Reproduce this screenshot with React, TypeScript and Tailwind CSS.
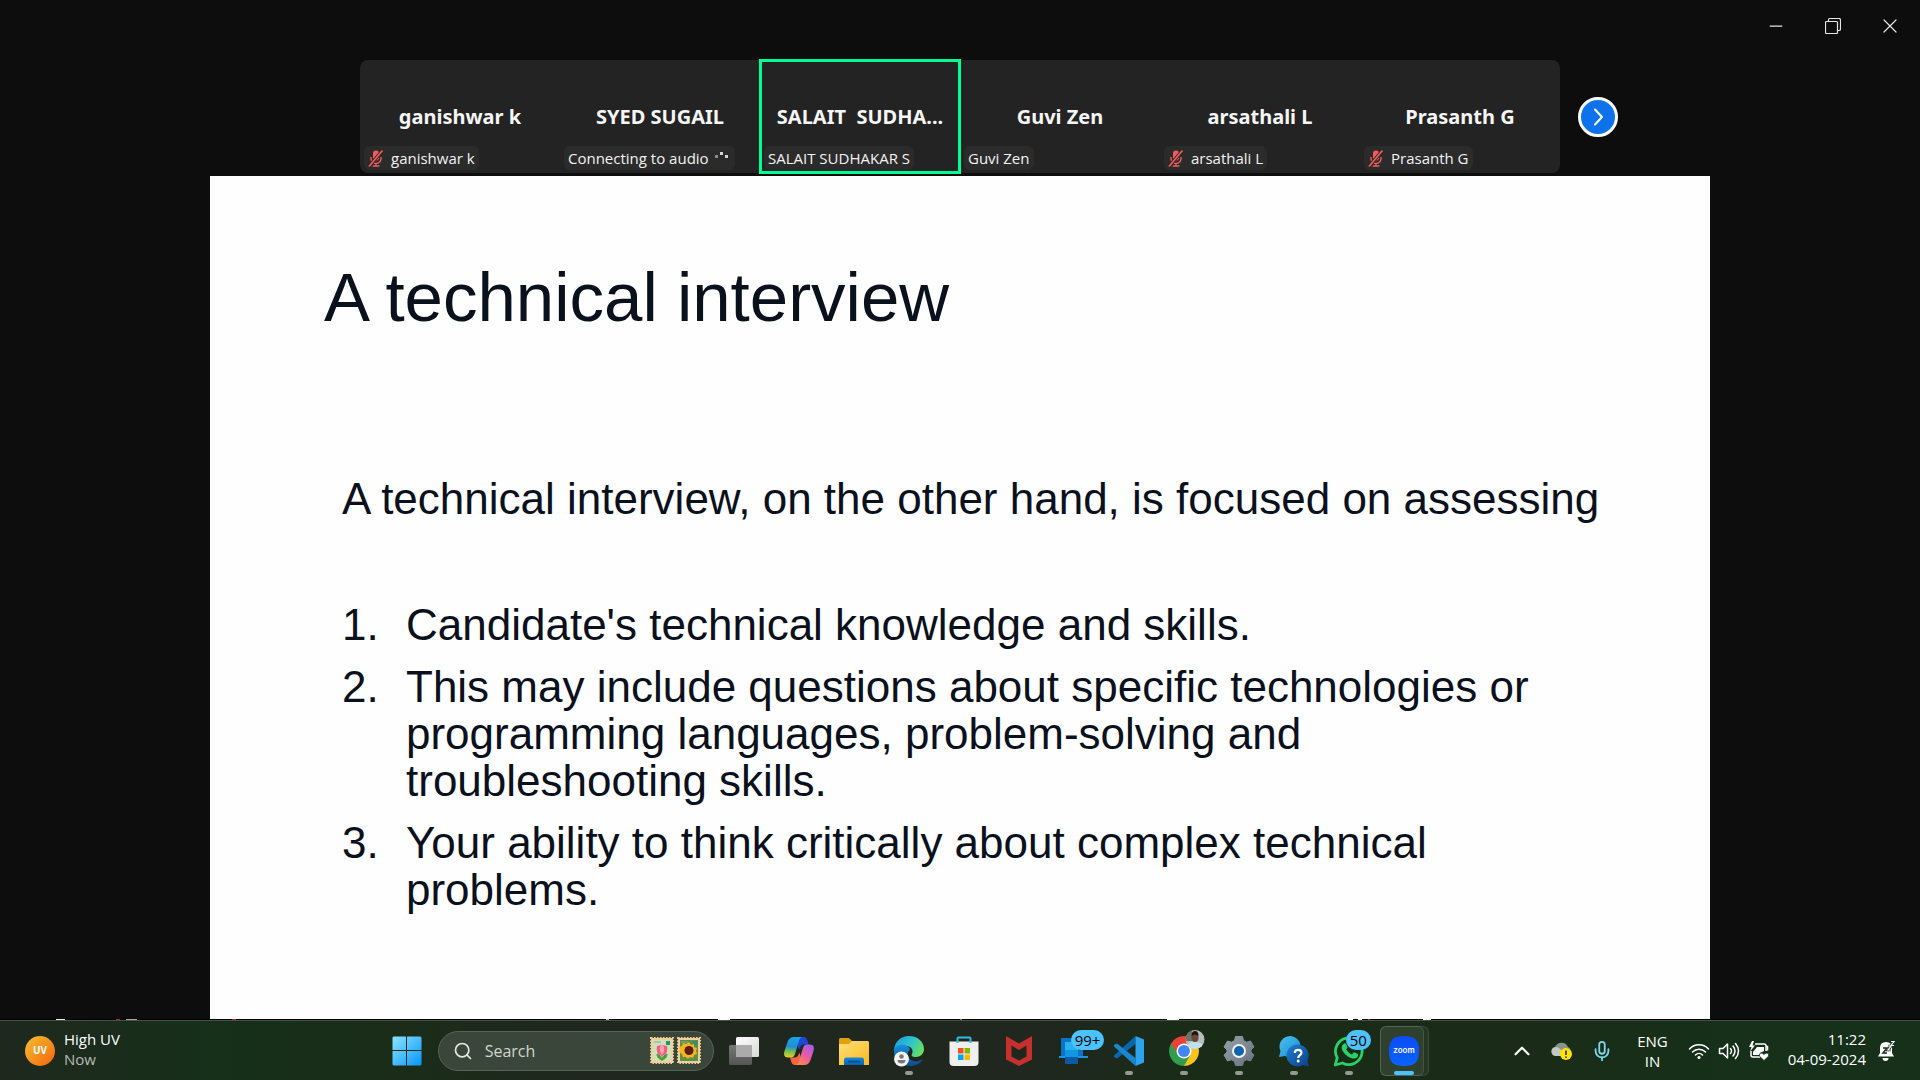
import React from "react";
import { Minus, X, Search, ChevronUp, Mic } from "lucide-react";

type Tile = { name: string; label: string; muted?: boolean; active?: boolean; connecting?: boolean };

const tiles: Tile[] = [
  { name: "ganishwar k", label: "ganishwar k", muted: true },
  { name: "SYED SUGAIL", label: "Connecting to audio", connecting: true },
  { name: "SALAIT  SUDHA...", label: "SALAIT SUDHAKAR S", active: true },
  { name: "Guvi Zen", label: "Guvi Zen" },
  { name: "arsathali L", label: "arsathali L", muted: true },
  { name: "Prasanth G", label: "Prasanth G", muted: true },
];

function MutedMic() {
  return (
    <svg width="16" height="17" viewBox="0 0 16 17" aria-hidden="true">
      <rect x="5" y="0.5" width="6" height="10" rx="3" fill="#f25c5c" />
      <path d="M3 7v1.5a5 5 0 0 0 10 0V7M8 13.5V16M4.5 16h7" stroke="#f25c5c" strokeWidth="1.4" fill="none" />
      <path d="M1 16.5L14.5 0.5" stroke="#262626" strokeWidth="3.4" />
      <path d="M1 16.5L14.5 0.5" stroke="#f25c5c" strokeWidth="1.7" />
    </svg>
  );
}

function ParticipantTile({ tile }: { tile: Tile }) {
  return (
    <li className="relative flex h-[113px] min-w-0 flex-1 items-center justify-center">
      <span className="font-['Noto_Sans',sans-serif] text-xl font-bold whitespace-pre text-[#f5f5f5]">{tile.name}</span>
      <span className="absolute bottom-[3px] left-1 flex h-6 items-center rounded-md bg-[#2b2b2b] px-1 text-[15px] leading-6 whitespace-nowrap text-[#f2f2f2]">
        {tile.muted && <span className="mr-[7px]"><MutedMic /></span>}
        {tile.label}
        {tile.connecting && (
          <svg className="ml-1" width="18" height="14" viewBox="0 0 18 14" aria-hidden="true">
            <g fill="#d5d5d5">
              <rect x="2" y="4" width="3" height="3" fill="#8a8a8a" />
              <rect x="7" y="1" width="3" height="3" />
              <rect x="12" y="4" width="3" height="3" />
            </g>
          </svg>
        )}
      </span>
      {tile.active && <span className="absolute -inset-x-px -inset-y-px border-[3px] border-[#00ff91]" />}
    </li>
  );
}

function Stamp({ flower }: { flower: "tulip" | "sunflower" }) {
  return (
    <svg width="24" height="27" viewBox="0 0 24 27" aria-hidden="true">
      <rect x="1" y="1" width="22" height="25" fill="#f0cf98" stroke="#f0cf98" strokeWidth="2" strokeDasharray="1.6 1.4" />
      <rect x="3" y="3" width="18" height="21" fill={flower === "tulip" ? "#cfe0bd" : "#5f8d4a"} />
      <path d="M4 5h7" stroke="#7fb08f" />
      <rect x="16" y="4" width="4" height="4" fill="#2d8f6d" />
      {flower === "tulip" ? (
        <g>
          <path d="M12 16v8M12 23c-4-1-5-4-5-6 3 1 4 3 5 6zM12 23c4-1 5-4 5-6-3 1-4 3-5 6z" fill="#4f9b3b" stroke="#4f9b3b" />
          <path d="M7 9c2 0 3-1 5-1s3 1 5 1c1 6-1 9-5 10-4-1-6-4-5-10z" fill="#ee5f7c" />
          <path d="M12 7c3 3 3 7 0 11-3-4-3-8 0-11z" fill="#ff9eae" />
        </g>
      ) : (
        <g>
          <path d="M12 5l2 3 3-1 0 3 3 1-1 3 1 3-3 1-1 3-3-1-2 2-2-2-3 0-1-3-3-2 1-3-1-2 3-1 1-3 3 1z" fill="#f6b51c" />
          <circle cx="12" cy="13.500" r="4.500" fill="#5a1e12" />
        </g>
      )}
    </svg>
  );
}

const WindowsLogo = () => (
  <svg width="30" height="30" viewBox="0 0 30 30">
    <defs>
      <linearGradient id="win" x1="0" y1="0" x2="1" y2="1">
        <stop offset="0" stopColor="#8be4ff" />
        <stop offset="1" stopColor="#0796f8" />
      </linearGradient>
    </defs>
    <path d="M1.500 0.500H14V14H0.500V1.500zM15 0.500h13.500l1 1V14H15zM0.500 15H14v14.500H1.500l-1-1zM15 15h14.500v13.500l-1 1H15z" fill="url(#win)" />
  </svg>
);

const TaskView = () => (
  <svg width="32" height="32" viewBox="0 0 32 32">
    <defs>
      <linearGradient id="tvb" x1="0" y1="0" x2="0" y2="1"><stop offset="0" stopColor="#777" /><stop offset="1" stopColor="#555" /></linearGradient>
      <linearGradient id="tvf" x1="0" y1="0" x2="1" y2="1"><stop offset="0" stopColor="#fff" /><stop offset="1" stopColor="#d9d9d9" /></linearGradient>
    </defs>
    <rect x="8" y="2" width="23" height="20" rx="1.500" fill="url(#tvf)" />
    <rect x="1" y="10" width="23" height="20" rx="1.500" fill="url(#tvb)" />
    <rect x="8" y="10" width="16" height="12" fill="#ababab" />
  </svg>
);

const Copilot = () => (
  <svg width="32" height="32" viewBox="0 0 32 32">
    <defs>
      <linearGradient id="cpa" x1="0.300" y1="0" x2="0.200" y2="1">
        <stop offset="0" stopColor="#18a5e8" /><stop offset="0.450" stopColor="#1f8fd0" /><stop offset="0.700" stopColor="#6fbf54" /><stop offset="1" stopColor="#f0cf1c" />
      </linearGradient>
      <linearGradient id="cpb" x1="0.800" y1="0" x2="0.200" y2="1">
        <stop offset="0" stopColor="#a25cf0" /><stop offset="0.500" stopColor="#e85aa5" /><stop offset="1" stopColor="#ff8a4a" />
      </linearGradient>
    </defs>
    <path d="M12 2h9c2 0 3 2 3.500 4l1 3.500H21c-3 0-4 2-5 5z" fill="#1b48d8" />
    <path d="M20 30h-8c-2.500 0-3.500-2-4-4l-1-3.500h4.500c2.500 0 4-2 5-5z" fill="#f4663f" />
    <path d="M11 2h8.500c-2 0-3 2-3.700 4.500L12 19c-.8 2.500-2 3.500-4 3.500H5c-4 0-4.500-3-3.500-6.500l3-9C5.500 4 7.500 2 11 2z" fill="url(#cpa)" />
    <path d="M21 30h-8.500c2 0 3-2 3.700-4.500L20 13c.8-2.500 2-3.500 4-3.500h3c4 0 4.500 3 3.500 6.500l-3 9C26.500 28 24.500 30 21 30z" fill="url(#cpb)" />
  </svg>
);

const Folder = () => (
  <svg width="32" height="32" viewBox="0 0 32 32">
    <defs>
      <linearGradient id="fld" x1="0" y1="0" x2="1" y2="1"><stop offset="0" stopColor="#ffe07a" /><stop offset="1" stopColor="#fbb91c" /></linearGradient>
      <linearGradient id="fldb" x1="0" y1="0" x2="0" y2="1"><stop offset="0" stopColor="#1787d8" /><stop offset="1" stopColor="#0b63b0" /></linearGradient>
    </defs>
    <path d="M1 4.500Q1 3 2.500 3H10q1 0 2 1l2 2h16v8H1z" fill="#e3a008" />
    <path d="M1 9h10l3-3h15.500Q31 6 31 7.500V30H1z" fill="url(#fld)" />
    <path d="M6 30v-5q0-2.500 2.500-2.500h15q2.500 0 2.500 2.500v5z" fill="url(#fldb)" />
    <path d="M10 26.500h12" stroke="#0a4c8c" strokeWidth="1.500" />
  </svg>
);

const Edge = () => (
  <svg width="32" height="32" viewBox="0 0 32 32">
    <defs>
      <linearGradient id="ed1" x1="0" y1="0.200" x2="1" y2="0.600"><stop offset="0" stopColor="#1c9de0" /><stop offset="0.550" stopColor="#2fc5c8" /><stop offset="1" stopColor="#6be05a" /></linearGradient>
      <linearGradient id="ed2" x1="0" y1="0" x2="0" y2="1"><stop offset="0" stopColor="#1591dc" /><stop offset="1" stopColor="#0c4a94" /></linearGradient>
    </defs>
    <path d="M1 15C2 6 8 1 16 1c9 0 15 6 15 13 0 5-4 8-8 8-4 0-5-1-4-3 2-4-1-8-6-8-6 0-10 4-12 4z" fill="url(#ed1)" />
    <path d="M1 15c2-5 7-6 11-5 3 1 5 3 5 5-4 2-3 9 3 11 4 1 7 0 10-2-3 5-8 7-13 7C7 31 0 24 1 15z" fill="url(#ed2)" />
    <circle cx="8.500" cy="24" r="7.500" fill="#f4f4f4" />
    <circle cx="8.500" cy="21.500" r="2.300" fill="#777" />
    <path d="M4.500 25h8q0 3.500-4 3.500t-4-3.500z" fill="#777" />
  </svg>
);

const Store = () => (
  <svg width="32" height="32" viewBox="0 0 32 32">
    <path d="M1.500 6.500h29V27q0 4-4 4h-21q-4 0-4-4z" fill="#efefef" />
    <path d="M9.500 8V3.500q0-1 1-1h11q1 0 1 1V8" fill="none" stroke="#2ebbe8" strokeWidth="2" />
    <rect x="10" y="13" width="5.500" height="5.500" fill="#f25022" /><rect x="16.500" y="13" width="5.500" height="5.500" fill="#7fba00" />
    <rect x="10" y="19.500" width="5.500" height="5.500" fill="#00a4ef" /><rect x="16.500" y="19.500" width="5.500" height="5.500" fill="#ffb900" />
  </svg>
);

const McAfee = () => (
  <svg width="32" height="32" viewBox="0 0 32 32">
    <path d="M3 1l13 7.500L29 1v23.500L16 31 3 24.500z" fill="#c6302f" />
    <path d="M8.500 10.500L16 15l7.500-4.500v11L16 25.500l-7.500-4z" fill="#1f281d" />
  </svg>
);

const PhoneLink = () => (
  <svg width="32" height="32" viewBox="0 0 32 32">
    <rect x="3" y="3" width="22" height="20" rx="1" fill="#0b74c8" />
    <path d="M1 21h29v2H1z" fill="#1b94e2" />
    <rect x="7" y="7" width="13" height="22" fill="#28b2f0" />
    <rect x="7" y="15" width="13" height="8" fill="#1297df" />
    <rect x="7" y="22" width="13" height="7" fill="#0a5aa8" />
  </svg>
);

const VSCode = () => (
  <svg width="32" height="32" viewBox="0 0 32 32">
    <path d="M22.500 1v8L4 23.500 1 22v-1.500z" fill="#0b66ad" />
    <path d="M22.500 31v-8L4 8.500 1 10v1.500z" fill="#1a86d0" />
    <path d="M22.500 1L31 4.500v23L22.500 31z" fill="#2ba5ee" />
  </svg>
);

const Chrome = () => (
  <svg width="38" height="38" viewBox="0 0 38 38">
    <path d="M17 22L29.990 14.500A15 15 0 0 1 17 37z" fill="#fcc31e" />
    <path d="M17 22l6.500 3.750L17 37A15 15 0 0 1 4.010 14.500z" fill="#2f9e4f" />
    <path d="M17 15h13.300l-.31-.5A15 15 0 0 0 4.010 14.500L10.900 25.500z" fill="#ea4335" />
    <circle cx="17" cy="22" r="7.500" fill="#fff" />
    <circle cx="17" cy="22" r="6" fill="#4285f4" />
    <clipPath id="av"><circle cx="28" cy="10.500" r="9.500" /></clipPath>
    <g clipPath="url(#av)">
      <rect x="18" y="0" width="20" height="21" fill="#b9beb8" />
      <rect x="18" y="0" width="7" height="12" fill="#6d7268" />
      <path d="M19 21c0-6 4-8 9-8s9 2 9 8z" fill="#bfe3ee" />
      <ellipse cx="28" cy="8.500" rx="3.500" ry="4.500" fill="#6b4535" />
      <path d="M24.500 7q0-5 3.500-5t3.500 5q-3.500-3-7 0z" fill="#1a1512" />
    </g>
  </svg>
);

const Gear = () => (
  <svg width="32" height="32" viewBox="0 0 32 32">
    <defs><linearGradient id="gr" x1="0" y1="0" x2="1" y2="1"><stop offset="0" stopColor="#97a2ad" /><stop offset="1" stopColor="#66717c" /></linearGradient></defs>
    <path d="M12.500 1.500h7l1 4 3 1.700 4-1.200 3.500 6-3 2.900v2.200l3 2.900-3.500 6-4-1.200-3 1.700-1 4h-7l-1-4-3-1.700-4 1.200-3.500-6 3-2.900v-2.200L1 12l3.500-6 4 1.200 3-1.700z" fill="url(#gr)" strokeLinejoin="round" stroke="url(#gr)" />
    <circle cx="16" cy="16" r="7" fill="#f1f4f7" />
    <circle cx="16" cy="16" r="5" fill="#1263ad" />
  </svg>
);

const GetHelp = () => (
  <svg width="32" height="32" viewBox="0 0 32 32">
    <defs>
      <linearGradient id="gh1" x1="0" y1="0" x2="1" y2="1"><stop offset="0" stopColor="#4bc4f2" /><stop offset="1" stopColor="#1788cf" /></linearGradient>
      <linearGradient id="gh2" x1="0" y1="0" x2="1" y2="1"><stop offset="0" stopColor="#1f7fd4" /><stop offset="1" stopColor="#0d3f86" /></linearGradient>
    </defs>
    <path d="M1 22l1.500-6A10.500 10.500 0 1 1 11 22q-2 0-4-1z" fill="url(#gh1)" />
    <path d="M20 9.500a11 11 0 0 1 9.500 16L31 31.500l-6-1.500A11 11 0 1 1 20 9.500z" fill="url(#gh2)" />
    <path d="M16.800 18q0-3.200 3.300-3.200t3.300 2.900c0 2.500-3.200 2.300-3.200 5.300" fill="none" stroke="#fff" strokeWidth="2.200" />
    <circle cx="20.200" cy="26" r="1.500" fill="#fff" />
  </svg>
);

const WhatsApp = () => (
  <svg width="32" height="32" viewBox="0 0 32 32">
    <path d="M2.200 30l2-7.200A13.300 13.300 0 1 1 9.500 28z" fill="none" stroke="#25d366" strokeWidth="2.800" strokeLinejoin="round" />
    <path d="M10.500 9c1-1 2.300-.8 2.700.2l1.200 2.900c.2.500-.2 1-1.200 2.200 1.500 2.700 3.300 4.200 5.800 5.300l1.500-1.900c.3-.4.700-.5 1.200-.3l2.800 1.400c1 .5.500 2.700-.5 3.700-1.200 1.200-3.500 1.500-6 .5-4.500-1.700-8-5.500-9-8.500-.7-2.200-.3-4 1.500-5.500z" fill="#25d366" />
  </svg>
);

const Zoom = () => (
  <svg width="32" height="32" viewBox="0 0 32 32">
    <defs><linearGradient id="zm" x1="0" y1="0" x2="0" y2="1"><stop offset="0" stopColor="#0b4cf5" /><stop offset="1" stopColor="#0a62ff" /></linearGradient></defs>
    <path d="M16 1c11 0 15 4 15 15s-4 15-15 15S1 27 1 16 5 1 16 1z" fill="url(#zm)" />
    <text x="16" y="18" textAnchor="middle" fontFamily="Inter, sans-serif" fontSize="8" fontWeight="600" fill="#fff">zoom</text>
  </svg>
);

type AppIcon = { name: string; icon: React.ReactNode; running?: boolean; badge?: string; active?: boolean };

const apps: AppIcon[] = [
  { name: "Task view", icon: <TaskView /> },
  { name: "Copilot", icon: <Copilot /> },
  { name: "File Explorer", icon: <Folder /> },
  { name: "Microsoft Edge", icon: <Edge />, running: true },
  { name: "Microsoft Store", icon: <Store /> },
  { name: "McAfee", icon: <McAfee /> },
  { name: "Phone Link", icon: <PhoneLink />, badge: "99+" },
  { name: "Visual Studio Code", icon: <VSCode />, running: true },
  { name: "Google Chrome", icon: <span className="-mt-[6px] -mr-1"><Chrome /></span>, running: true },
  { name: "Settings", icon: <Gear />, running: true },
  { name: "Get Help", icon: <GetHelp />, running: true },
  { name: "WhatsApp", icon: <WhatsApp />, running: true, badge: "50" },
  { name: "Zoom", icon: <Zoom />, running: true, active: true },
];

function AppButton({ app }: { app: AppIcon }) {
  return (
    <button aria-label={app.name} className="relative flex h-[58px] w-[55px] items-center justify-center">
      {app.active && (
        <>
          <span className="absolute inset-y-1 left-[3px] w-[49px] rounded-md border border-white/10 bg-white/5" />
          <span className="absolute inset-y-1 left-[3px] w-11 rounded-md border border-white/10 bg-white/5" />
        </>
      )}
      <span className="relative flex">{app.icon}</span>
      {app.badge && (
        <span className="absolute top-2 left-6 flex h-5 min-w-6 items-center justify-center rounded-full bg-[#4cc2ff] px-1 text-[15px] leading-5 text-black">
          {app.badge}
        </span>
      )}
      {app.running && (
        <span className={app.active ? "absolute bottom-[5px] h-1 w-5 rounded-full bg-[#4cc2ff]" : "absolute bottom-[5px] h-1 w-2 rounded-full bg-[#949a93]"} />
      )}
    </button>
  );
}

const specks = [
  { x: 56, w: 9, c: "#e8e8e8" }, { x: 116, w: 4, c: "#c2184b" }, { x: 126, w: 11, c: "#a8a8a8" }, { x: 232, w: 4, c: "#c2184b" },
  { x: 606, w: 3, c: "#bbbbbb" }, { x: 718, w: 12, c: "#ffffff" }, { x: 960, w: 2, c: "#8b7040" }, { x: 1167, w: 12, c: "#ffffff" },
  { x: 1348, w: 5, c: "#ffffff" }, { x: 1358, w: 4, c: "#ffffff" }, { x: 1368, w: 2, c: "#c2184b" }, { x: 1423, w: 8, c: "#ffffff" },
];

function Tray() {
  return (
    <div className="flex flex-1 items-center justify-end pr-6 text-[15px] leading-5 text-white">
      <button aria-label="Show hidden icons" className="mr-4"><ChevronUp size={26} strokeWidth={2} /></button>
      <button aria-label="OneDrive" className="mr-[18px]">
        <svg width="22" height="20" viewBox="0 0 22 20">
          <path d="M5 15a4.500 4.500 0 0 1-1-8.900A7 7 0 0 1 17 6q3 1 2 5L9 15z" fill="#8c918b" />
          <path d="M5 15a4.500 4.500 0 0 1 0-9q3 0 5 3l4 2v4z" fill="#c4c8c3" />
          <circle cx="15" cy="13" r="6" fill="#fde300" />
          <path d="M15 9.500v4.500M15 15.500V17" stroke="#222" strokeWidth="1.500" />
        </svg>
      </button>
      <button aria-label="Microphone in use" className="mr-6"><Mic size={22} strokeWidth={2} color="#7fd6ea" /></button>
      <button aria-label="Input language" className="mr-5 flex flex-col items-center"><span>ENG</span><span>IN</span></button>
      <button aria-label="Network, volume and battery" className="mr-[18px] flex items-center gap-2">
        <svg width="22" height="20" viewBox="0 0 22 20" fill="none" stroke="#fff" strokeWidth="1.500" strokeLinecap="round">
          <path d="M1.500 8a13 13 0 0 1 19 0M4.500 11a9 9 0 0 1 13 0M7.500 14a5 5 0 0 1 7 0" />
          <circle cx="11" cy="16.500" r="1.500" fill="#fff" stroke="none" />
        </svg>
        <svg width="22" height="20" viewBox="0 0 22 20" fill="none" stroke="#fff" strokeWidth="1.500" strokeLinecap="round" strokeLinejoin="round">
          <path d="M1.500 7.500H5L9.500 3v14L5 12.500H1.500zM12.500 7.500q2 2.500 0 5M15 5q4 5 0 10M17.500 2.500q6 7.500 0 15" />
        </svg>
        <svg width="22" height="20" viewBox="0 0 22 20">
          <path d="M7 3h9q2 0 2 2v5M12 16H5q-2 0-2-2v-4" fill="none" stroke="#fff" strokeWidth="1.500" />
          <path d="M5 14V11l4-5h7v4l-4 2v2z" fill="#fff" />
          <path d="M18 5.500h1.500v4" stroke="#fff" strokeWidth="1.500" fill="none" />
          <path d="M4 0L1 6h2.500L2 10.500 7 4.500H4.500L6 0z" fill="#fff" />
          <path d="M16 19.500l-4.500-4.300q-1-2.700 1.500-3.200 2 0 3 1.500 1-1.500 3-1.500 2.500.5 1.500 3.200z" fill="#fff" stroke="#16301a" strokeWidth="0.800" />
        </svg>
      </button>
      <button aria-label="Clock" className="mr-[10px] flex flex-col items-end pb-1"><span>11:22</span><span>04-09-2024</span></button>
      <button aria-label="Notifications">
        <svg width="20" height="22" viewBox="0 0 20 22">
          <path d="M10 2q6 0 6 6v5l2 3.500H2L4 13V8q0-6 6-6z" fill="#fff" />
          <path d="M6.500 18h6a3 3 0 0 1-6 0z" fill="#fff" />
          <path d="M7 8h4l-4 5h4" fill="none" stroke="#16301a" strokeWidth="1.500" />
          <path d="M12 6h3l-3 4h3M15 1.500h3l-3 4h3" fill="none" stroke="#16301a" strokeWidth="2.600" />
          <path d="M12 6h3l-3 4h3M15 1.500h3l-3 4h3" fill="none" stroke="#fff" strokeWidth="1.200" />
        </svg>
      </button>
    </div>
  );
}

export default function App() {
  return (
    <div className="flex min-h-screen flex-col bg-[#0d0d0d] font-['Open_Sans',sans-serif]">
      <header className="flex h-[60px] items-start justify-end gap-[33px] pt-3 pr-[18px] text-[#e6e6e6]">
        <button aria-label="Minimize" className="flex h-7 w-6 items-center justify-center"><Minus size={20} strokeWidth={1.5} /></button>
        <button aria-label="Restore" className="flex h-7 w-6 items-center justify-center">
          <svg width="16" height="16" viewBox="0 0 16 16" fill="none" stroke="#e6e6e6" strokeWidth="1.200">
            <rect x="0.500" y="3.500" width="12" height="12" rx="1" />
            <path d="M3.500 3.500V2q0-1.500 1.500-1.500h9q1.500 0 1.500 1.500v9q0 1.500-1.500 1.500h-1.500" />
          </svg>
        </button>
        <button aria-label="Close" className="flex h-7 w-6 items-center justify-center"><X size={26} strokeWidth={1.2} /></button>
      </header>

      <section aria-label="Participants" className="mb-[3px] flex items-center justify-center">
        <div className="w-[58px] shrink-0" />
        <ul className="flex w-[62.5%] rounded-lg bg-[#232323]">
          {tiles.map((t) => <ParticipantTile key={t.name} tile={t} />)}
        </ul>
        <button aria-label="Next participants" className="ml-[18px] flex size-10 shrink-0 items-center justify-center rounded-full border-3 border-white bg-[#0e72ed]">
          <svg width="12" height="18" viewBox="0 0 12 18" fill="none" stroke="#fff" strokeWidth="2" strokeLinecap="round" strokeLinejoin="round"><path d="M3 1.500L10 9l-7 7.500" /></svg>
        </button>
      </section>

      <main className="mx-auto flex w-[78.125%] flex-1 flex-col bg-[#fefefe] pr-[90px] pl-[114px] font-['Liberation_Sans',Arial,sans-serif] text-[#0a101c]">
        <h1 className="mt-[82px] text-[69px] leading-[80px]">A technical interview</h1>
        <div className="mt-[137px] pl-[18px] text-[44px] leading-[47px]">
          <p className="whitespace-nowrap">A technical interview, on the other hand, is focused on assessing</p>
          <ol className="mt-[79px] flex flex-col gap-[15px]">
            <li className="flex"><span className="w-16 shrink-0">1.</span><span>Candidate's technical knowledge and skills.</span></li>
            <li className="flex"><span className="w-16 shrink-0">2.</span><span>This may include questions about specific technologies or<br />programming languages, problem-solving and<br />troubleshooting skills.</span></li>
            <li className="flex"><span className="w-16 shrink-0">3.</span><span>Your ability to think critically about complex technical<br />problems.</span></li>
          </ol>
        </div>
      </main>

      <svg className="h-px w-full bg-black" viewBox="0 0 1920 1" preserveAspectRatio="none" aria-hidden="true">
        {specks.map((s) => <rect key={s.x} x={s.x} y="0" width={s.w} height="1" fill={s.c} />)}
      </svg>
      <footer className="flex h-[60px] items-center border-t border-[#465246] bg-[linear-gradient(90deg,#1f281d_0%,#16301a_11%,#1a2d18_20%,#1f271e_30%,#1f271e_54%,#1a2c18_62%,#1a2c18_80%,#16301a_90%,#16301a_100%)]">
        <div className="flex w-[20.4%] items-center gap-[9px] pl-[25px]">
          <span className="flex size-[30px] items-center justify-center rounded-full bg-linear-to-br from-[#f3bf2d] to-[#f2600c] text-[10px] font-bold text-white">UV</span>
          <div className="pb-1 text-[15px] leading-5"><p className="text-white">High UV</p><p className="text-[#b5bcb4]">Now</p></div>
        </div>
        <nav aria-label="Taskbar" className="flex items-center">
          <button aria-label="Start" className="mr-4"><WindowsLogo /></button>
          <label className="mr-[3px] flex h-10 w-[276px] items-center gap-3 rounded-full border border-[#586357] bg-[#3b463a] pr-3 pl-[14px]">
            <Search size={20} color="#e4e7e3" strokeWidth={2} />
            <input aria-label="Search" placeholder="Search" className="w-full min-w-0 flex-1 bg-transparent text-base text-white outline-none placeholder:text-[#d0d5cf]" />
            <span className="flex gap-[3px]"><Stamp flower="tulip" /><Stamp flower="sunflower" /></span>
          </label>
          {apps.map((a) => <AppButton key={a.name} app={a} />)}
        </nav>
        <Tray />
      </footer>
    </div>
  );
}
